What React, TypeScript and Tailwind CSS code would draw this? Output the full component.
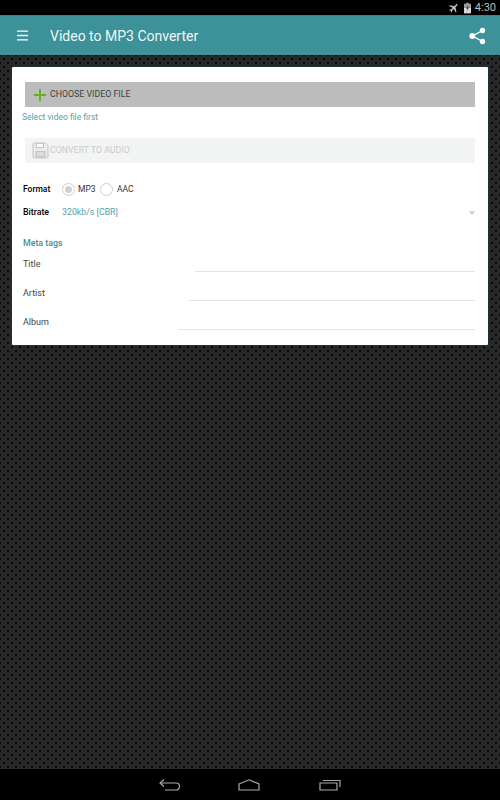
import { Menu } from 'lucide-react'

function StatusIcons() {
  return (
    <div className="h-[15px] bg-black flex items-center justify-end pr-[4px] gap-[4px] text-[#b5b5b5]">
      {/* airplane mode */}
      <svg width="12" height="12" viewBox="0 0 24 24" fill="#c4c4c4" className="rotate-45">
        <path d="M21 16v-2l-8-5V3.500a1.500 1.500 0 0 0-3 0V9l-8 5v2l8-2.500V19l-2 1.500V22l3.500-1 3.500 1v-1.500L13 19v-5.500z" />
      </svg>
      {/* battery */}
      <svg width="7" height="12" viewBox="0 0 8 12">
        <path d="M2.500 0h3v1H8v11H0V1h2.500z" fill="#9a9a9a" />
        <path d="M0 6h8v6H0z" fill="#d8d8d8" />
        <path d="M4.500 2.500 2.500 6.500h1.500L3.500 9.500l2-4H4z" fill="#222" />
      </svg>
      <span className="text-[11px] leading-none text-[#bdbdbd]">4:30</span>
    </div>
  )
}

function Radio({ checked }: { checked?: boolean }) {
  return (
    <span className="w-[13px] h-[13px] rounded-full border border-[#cfcfcf] flex items-center justify-center">
      {checked && <span className="w-[7px] h-[7px] rounded-full bg-[#d0d0d0]" />}
    </span>
  )
}

function MetaField({ label, inset }: { label: string; inset: string }) {
  return (
    <div className="h-[29px] flex items-center relative text-[9px] text-[#444]">
      <span className="-translate-y-px">{label}</span>
      <div className={`absolute right-0 bottom-[8px] h-px bg-[#e3e3e3] ${inset}`} />
    </div>
  )
}

export default function App() {
  return (
    <div className="w-[500px] h-[800px] flex flex-col overflow-hidden font-['Roboto',sans-serif] bg-[#2a2a2a]">
      <StatusIcons />

      {/* App bar */}
      <div className="h-[40px] bg-[#3d9198] flex items-center text-white border-t border-[#37858c]">
        <Menu size={15} strokeWidth={2.200} className="ml-[15px]" />
        <span className="ml-[20px] text-[14px] text-[#eef6f6] translate-y-px">Video to MP3 Converter</span>
        <svg width="17" height="18" viewBox="0 0 17 18" fill="white" className="ml-auto mr-[14px]">
          <path d="M13.500 3.500 3.500 9l10 5.500" stroke="white" strokeWidth="1.300" fill="none" />
          <circle cx="13.500" cy="3.500" r="2.700" />
          <circle cx="3.300" cy="9" r="3" />
          <circle cx="13.500" cy="14.500" r="2.700" />
        </svg>
      </div>

      {/* Content */}
      <div className="flex-1 px-[11px] pt-[11px] bg-[#282828] bg-[radial-gradient(circle,#080808_0.900px,transparent_1.200px),radial-gradient(circle,#080808_0.900px,transparent_1.200px)] bg-[length:8px_8px] bg-[position:0_0,4px_4px]">
        <div className="h-[280px] bg-white rounded-[2px] border border-[#1d3538] px-[12px] pt-[15px]">
          <button className="w-[450px] ml-px h-[25px] bg-[#bbbcbb] flex items-center text-[8.800px] text-[#444]">
            <svg width="12" height="12" viewBox="0 0 12 12" className="ml-[9px] mr-[4px]">
              <path d="M5 0h2v5h5v2H7v5H5V7H0V5h5z" fill="#6cae1c" />
            </svg>
            CHOOSE VIDEO FILE
          </button>
          <p className="mt-[5px] -ml-[2px] text-[8.500px] leading-[11px] text-[#5c9fa7]">Select video file first</p>

          <button className="w-[450px] ml-px mt-[15px] h-[25px] bg-[#f3f4f4] flex items-center text-[8.800px] text-[#cbcbcb]">
            <svg width="17" height="17" viewBox="0 0 17 17" className="ml-[7px] mr-px" fill="none">
              <path d="M1.500 1h12l2.500 2.500V15a1 1 0 0 1-1 1H2a1 1 0 0 1-1-1V1.500z" stroke="#c4c4c4" fill="#ebebeb" />
              <path d="M4.500 1.500h7v4h-7z" fill="#fafafa" stroke="#c4c4c4" />
              <path d="M3.500 9h10v6.500h-10z" fill="#c4c4c4" />
              <path d="M5 11h7M5 13h7" stroke="#f3f4f4" />
            </svg>
            CONVERT TO AUDIO
          </button>

          <div className="mt-[20px] -ml-px flex items-center h-[13px] text-[8.500px] text-[#333]">
            <span className="w-[39px] font-medium text-black">Format</span>
            <Radio checked />
            <span className="ml-[3px] w-[22px]">MP3</span>
            <Radio />
            <span className="ml-[4px]">AAC</span>
          </div>

          <div className="mt-[10px] -ml-px flex items-center h-[13px] text-[8.800px]">
            <span className="w-[39px] font-medium text-black">Bitrate</span>
            <span className="text-[#5aa0a8]">320kb/s [CBR]</span>
            <span className="ml-auto mr-px w-0 h-0 border-x-[3.500px] border-x-transparent border-t-[4px] border-t-[#cfcfcf]" />
          </div>

          <p className="mt-[19px] -ml-px text-[8.800px] leading-[11px] font-medium text-[#3d9198]">Meta tags</p>

          <div className="-ml-px w-[452px] mt-[2px]">
            <MetaField label="Title" inset="left-[172px]" />
            <MetaField label="Artist" inset="left-[166px]" />
            <MetaField label="Album" inset="left-[155px]" />
          </div>
        </div>
      </div>

      {/* Nav bar */}
      <div className="h-[31px] bg-black flex items-center justify-center pt-px">
        <svg width="22" height="12" viewBox="0 0 22 12" fill="none" stroke="#a9a9a9" strokeWidth="1.200">
          <path d="M1 4h16a3.500 3.500 0 0 1 0 7H6" />
          <path d="M5 .5 1 4l4 3.500" />
        </svg>
        <svg width="22" height="12" viewBox="0 0 22 12" fill="none" stroke="#a9a9a9" strokeWidth="1.200" className="ml-[57px] mr-[59px]">
          <path d="M1 5 11 .8 21 5v6H1z" />
        </svg>
        <svg width="22" height="12" viewBox="0 0 22 12" fill="none" stroke="#a9a9a9" strokeWidth="1.200">
          <path d="M1 4h17v7H1z" />
          <path d="M4 1.500h17V8" />
        </svg>
      </div>
    </div>
  )
}
